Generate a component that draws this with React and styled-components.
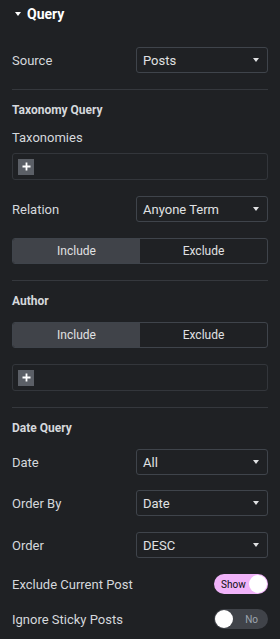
import React from "react";
import styled, { createGlobalStyle } from "styled-components";

const Global = createGlobalStyle`
  html, body { margin: 0; padding: 0; background: #1f2124; }
  body { font-family: Roboto, "Liberation Sans", Arial, sans-serif; color: #d5d8dc; }
  * { box-sizing: border-box; }
`;

const Panel = styled.div`
  width: 280px;
  min-height: 639px;
  background: #1f2124;
  padding: 0 12px;
  display: flex;
  flex-direction: column;
`;

const Header = styled.div`
  height: 28px;
  display: flex;
  align-items: center;
  gap: 6px;
  padding-left: 3px;
  font-size: 14px;
  font-weight: 700;
  color: #ffffff;
`;

const Caret = styled.span`
  width: 0;
  height: 0;
  border-left: ${(p) => p.$w || 3}px solid transparent;
  border-right: ${(p) => p.$w || 3}px solid transparent;
  border-top: ${(p) => p.$h || 4}px solid ${(p) => p.$color || "#ffffff"};
`;

const Row = styled.div`
  display: flex;
  align-items: center;
  justify-content: space-between;
  height: ${(p) => p.$h || 26}px;
  margin-top: ${(p) => p.$mt ?? 16}px;
`;

const Label = styled.span`
  font-size: 13px;
  color: #d5d8dc;
  line-height: 15px;
`;

const Select = styled.div`
  width: 132px;
  height: 26px;
  border: 1px solid #3f444b;
  border-radius: 3px;
  display: flex;
  align-items: center;
  justify-content: space-between;
  padding: 0 8px 0 6px;
  font-size: 13px;
  color: #e0e1e3;
`;

const Divider = styled.div`
  height: 1px;
  background: #35383d;
  margin-top: 16px;
`;

const Heading = styled.div`
  margin-top: 13px;
  font-size: 12px;
  font-weight: 700;
  line-height: 15px;
  color: #d5d8dc;
`;

const SubLabel = styled.div`
  margin-top: 12px;
  font-size: 13px;
  line-height: 15px;
  color: #d5d8dc;
`;

const Repeater = styled.div`
  height: 27px;
  margin-top: ${(p) => p.$mt ?? 16}px;
  border: 1px solid #33363b;
  border-radius: 3px;
  display: flex;
  align-items: center;
  padding-left: 5px;
`;

const AddButton = styled.div`
  width: 16px;
  height: 16px;
  background: #5b5f66;
  display: flex;
  align-items: center;
  justify-content: center;
`;

const Segmented = styled.div`
  height: 26px;
  margin-top: ${(p) => p.$mt ?? 16}px;
  border: 1px solid #3f444b;
  border-radius: 3px;
  display: grid;
  grid-template-columns: 1fr 1fr;
  overflow: hidden;
`;

const Segment = styled.div`
  display: flex;
  align-items: center;
  justify-content: center;
  font-size: 12px;
  color: #e0e1e3;
  background: ${(p) => (p.$active ? "#404349" : "transparent")};
`;

const Switch = styled.div`
  width: 54px;
  height: 20px;
  border-radius: 10px;
  background: ${(p) => (p.$on ? "#f0b3f9" : "#404349")};
  display: flex;
  align-items: center;
  flex-direction: ${(p) => (p.$on ? "row" : "row-reverse")};
  justify-content: space-between;
  padding: 0 1px;
`;

const SwitchText = styled.span`
  font-size: 10px;
  color: ${(p) => (p.$on ? "#0c0d0e" : "#9da5ae")};
  padding: ${(p) => (p.$on ? "0 0 0 6px" : "0 9px 0 0")};
  flex: 1;
  text-align: ${(p) => (p.$on ? "left" : "right")};
`;

const Knob = styled.span`
  width: 18px;
  height: 18px;
  border-radius: 50%;
  background: #ffffff;
`;

const Plus = () => (
  <svg width="9" height="9" viewBox="0 0 9 9">
    <path d="M4.5 0.5v8M0.5 4.5h8" stroke="#ffffff" strokeWidth="1.8" />
  </svg>
);

const SelectRow = ({ label, value, mt }) => (
  <Row $mt={mt}>
    <Label>{label}</Label>
    <Select>
      <span>{value}</span>
      <Caret $w={3.5} $h={4} $color="#e0e1e3" />
    </Select>
  </Row>
);

const SwitchRow = ({ label, on, mt }) => (
  <Row $h={20} $mt={mt}>
    <Label>{label}</Label>
    <Switch $on={on}>
      <SwitchText $on={on}>{on ? "Show" : "No"}</SwitchText>
      <Knob />
    </Switch>
  </Row>
);

const IncludeExclude = ({ mt }) => (
  <Segmented $mt={mt}>
    <Segment $active>Include</Segment>
    <Segment>Exclude</Segment>
  </Segmented>
);

export default function App() {
  return (
    <>
      <Global />
      <Panel>
        <Header>
          <Caret $w={3} $h={4} />
          <span>Query</span>
        </Header>
        <SelectRow label="Source" value="Posts" mt={19} />
        <Divider />

        <Heading>Taxonomy Query</Heading>
        <SubLabel>Taxonomies</SubLabel>
        <Repeater $mt={8}>
          <AddButton><Plus /></AddButton>
        </Repeater>
        <SelectRow label="Relation" value="Anyone Term" />
        <IncludeExclude />
        <Divider />

        <Heading>Author</Heading>
        <IncludeExclude mt={13} />
        <Repeater>
          <AddButton><Plus /></AddButton>
        </Repeater>
        <Divider />

        <Heading>Date Query</Heading>
        <SelectRow label="Date" value="All" mt={13} />
        <SelectRow label="Order By" value="Date" mt={15} />
        <SelectRow label="Order" value="DESC" />
        <SwitchRow label="Exclude Current Post" on mt={16} />
        <SwitchRow label="Ignore Sticky Posts" mt={15} />
      </Panel>
    </>
  );
}
